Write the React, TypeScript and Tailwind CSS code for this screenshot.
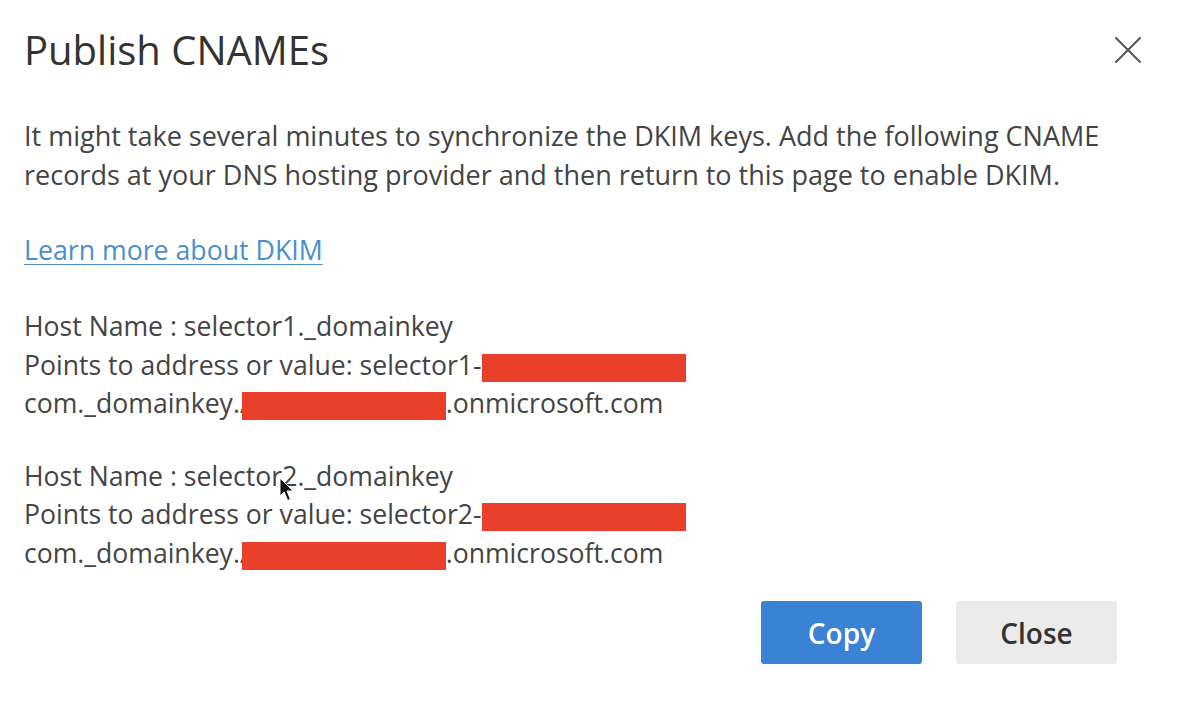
import React from 'react'

type HostRecord = { selector: string }

const records: HostRecord[] = [{ selector: 'selector1' }, { selector: 'selector2' }]

function Redacted({ className = '' }: { className?: string }) {
  return <span className={`relative inline-block w-[204px] h-[28px] bg-[#e8402a] align-[-7px] ${className}`} />
}

function RecordBlock({ selector, withCursor }: { selector: string; withCursor?: boolean }) {
  return (
    <div className="relative text-[26.6px] leading-[38.5px] text-[#444]">
      <div>Host Name : {selector}._domainkey</div>
      <div>
        Points to address or value: {selector}-<Redacted />
      </div>
      <div>
        com._domainkey./<Redacted className="-ml-[8px]" />.onmicrosoft.com
      </div>
      {withCursor && (
        <svg className="absolute left-[255px] top-[20px]" width="15" height="26" viewBox="0 0 15 26">
          <path
            d="M1 1 L1 19 L5.2 15 L8.6 23.5 L11.4 22.3 L8 14 L14 14 Z"
            fill="#111"
            stroke="#fff"
            strokeWidth="1"
            strokeLinejoin="round"
          />
        </svg>
      )}
    </div>
  )
}

export default function App() {
  return (
    <div className="w-[1184px] h-[702px] bg-white font-['Open_Sans',sans-serif] text-[#333] pl-[24px] pr-[67px] pt-[28px]">
      <div className="flex items-center justify-between">
        <h1 className="text-[40px] leading-[44px] font-normal text-[#333]">Publish CNAMEs</h1>
        <button className="mr-[-25px] text-[#555]" aria-label="Close">
          <svg width="28" height="28" viewBox="0 0 28 28">
            <path d="M2 2 L26 26 M26 2 L2 26" stroke="currentColor" strokeWidth="2" strokeLinecap="round" />
          </svg>
        </button>
      </div>

      <p className="mt-[44px] text-[27px] leading-[39px] text-[#444]">
        It might take several minutes to synchronize the DKIM keys. Add the following CNAME
        <br />
        records at your DNS hosting provider and then return to this page to enable DKIM.
      </p>

      <a
        href="#"
        className="inline-block mt-[36px] text-[26.7px] leading-[39px] text-[#4a8fc9] underline decoration-1 underline-offset-4"
      >
        Learn more about DKIM
      </a>

      <div className="mt-[38px] flex flex-col gap-[34px]">
        {records.map((r, i) => (
          <RecordBlock key={r.selector} selector={r.selector} withCursor={i === 1} />
        ))}
      </div>

      <div className="mt-[29px] flex justify-end gap-[34px]">
        <button className="w-[161px] h-[63px] rounded-[3px] bg-[#3a82d4] text-white text-[28px] font-semibold">
          Copy
        </button>
        <button className="w-[161px] h-[63px] rounded-[3px] bg-[#ebebeb] text-[#333] text-[28px] font-semibold">
          Close
        </button>
      </div>
    </div>
  )
}
